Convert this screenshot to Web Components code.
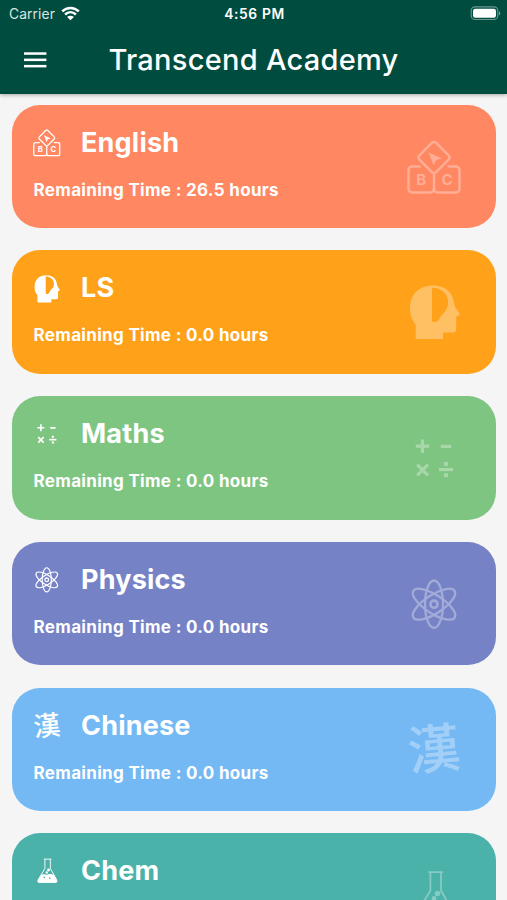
<!DOCTYPE html>
<html lang="en">
<head>
  <meta charset="utf-8">
  <title>Transcend Academy</title>
  <style>
    html{
      height: 100%;
      overflow: hidden;
    }

    body{
      margin: 0;
      height: 100%;
      overflow: hidden;
      background: #f5f5f5;
      font-family: Inter, "Liberation Sans", sans-serif;
      color: white;
    }
  </style>
</head>
<body>
  <ta-screen>
    <ta-status-bar slot="top" carrier="Carrier" time="4:56 PM"></ta-status-bar>
    <ta-app-bar slot="top">Transcend Academy</ta-app-bar>
    <ta-subject icon="blocks" hours="26.5" style="--card: #ff8762">English</ta-subject>
    <ta-subject icon="head" hours="0.0" style="--card: #ffa21a">LS</ta-subject>
    <ta-subject icon="maths" hours="0.0" style="--card: #7fc582">Maths</ta-subject>
    <ta-subject icon="atom" hours="0.0" style="--card: #7682c6">Physics</ta-subject>
    <ta-subject icon="han" hours="0.0" style="--card: #74b9f4">Chinese</ta-subject>
    <ta-subject icon="flask" hours="0.0" style="--card: #4bb2a9">Chem</ta-subject>
  </ta-screen>

  <script>
    // Every icon is drawn on a 54 x 54 grid
    const ICONS = {
      blocks: `
        <g fill="none" stroke="currentColor" stroke-width="2.5" stroke-linejoin="round" stroke-linecap="round">
          <path d="M12.5 26.6H5A3.5 3.5 0 0 0 1.5 30.1V49A3.5 3.5 0 0 0 5 52.5H23.5A3.5 3.5 0 0 0 27 49V34"/>
          <path d="M41.5 26.6H49A3.5 3.5 0 0 1 52.5 30.1V49A3.5 3.5 0 0 1 49 52.5H30.5A3.5 3.5 0 0 1 27 49"/>
          <rect x="15.2" y="5.7" width="23.6" height="23.6" rx="3" transform="rotate(45 27 17.5)"/>
        </g>
        <path fill="currentColor" d="M21.5 12.5 35 18.5 29.2 20 26.7 25.3Z"/>
        <text x="14.2" y="45.4">B</text>
        <text x="40" y="45.4">C</text>`,
      head: `
        <path fill="currentColor" fill-rule="evenodd" d="M8.7 54V39.5C5 35.5 3 29.5 3 23 3 9 12.5 .5 26 .5 37.5 .5 45.7 7 47 17.5L48 22 52.3 28.3C53 30 52 30.9 49.2 31.6V43.5C49.2 46 48.2 47.4 46 47.4H36V54ZM25 2.8V35.5C25 38 29.8 37.8 32 34.8 33.2 31.5 35 29.5 37.3 27.2 40.3 24 41.4 20.5 41 16 40.2 7.5 33.5 2.8 25 2.8Z"/>`,
      maths: `
        <g fill="none" stroke="currentColor" stroke-width="3.2">
          <path d="M8.8 15.2H22.2M15.5 8.5V21.9M33.8 15.4H44.2"/>
          <path d="M10.2 33.6 20.9 44.3M20.9 33.6 10.2 44.3"/>
          <path d="M32 38.6H46"/>
        </g>
        <rect fill="currentColor" x="37" y="31" width="4" height="4"/>
        <rect fill="currentColor" x="37" y="42.2" width="4" height="4"/>`,
      atom: `
        <g fill="none" stroke="currentColor" stroke-width="2.3">
          <ellipse cx="27" cy="27.2" rx="9" ry="23.7"/>
          <ellipse cx="27" cy="27.2" rx="9.2" ry="24.6" transform="rotate(57 27 27.2)"/>
          <ellipse cx="27" cy="27.2" rx="9.2" ry="24.6" transform="rotate(-57 27 27.2)"/>
          <circle cx="27" cy="27.2" r="3.6" stroke-width="2.6"/>
        </g>`,
      han: `
        <text class="han" x="27" y="46.5" transform="rotate(-5 27 27)">漢</text>`,
      flask: `
        <g fill="none" stroke="currentColor" stroke-width="1.8" stroke-linejoin="round">
          <path d="M21.2 4.2H36.2M23.4 4.2V22.5L10.5 44C8.5 48 9.5 50 12 50H44.5C47 50 48 48 46 44L34 22.5V4.2"/>
        </g>
        <path fill="currentColor" fill-rule="evenodd" d="M16.5 35C22 32.5 25 35.5 29 34.5 33.5 33 36 33.5 40.9 35L46.3 44.3C48 48 47 50 44.5 50H12C9.5 50 8.5 48 10.5 44ZM22 38.5A1.6 1.6 0 1 0 22 41.7 1.6 1.6 0 1 0 22 38.5ZM33 40A1.5 1.5 0 1 0 33 43 1.5 1.5 0 1 0 33 40Z"/>
        <circle cx="30.5" cy="25.5" r="2.8" fill="currentColor"/>
        <circle cx="27" cy="30.5" r="2.4" fill="currentColor"/>`
    }

    class Screen extends HTMLElement{
      constructor(){
        super()
        this.attachShadow({mode: 'open'})
      }

      connectedCallback(){
        this.shadowRoot.innerHTML = `
          <style>
            :host{
              display: flex;
              flex-direction: column;
              height: 100vh;
              overflow: hidden;
            }

            header{
              position: relative;
              flex: none;
              height: 94px;
              background: #004d40;
              box-shadow: 0 1px 4px rgba(0,0,0,0.32);
            }

            main{
              display: flex;
              flex-direction: column;
              gap: 22.1px;
              padding: 10.8px 11px 0 12px;
            }
          </style>
          <header><slot name="top"></slot></header>
          <main><slot></slot></main>
        `
      }
    }

    class StatusBar extends HTMLElement{
      constructor(){
        super()
        this.attachShadow({mode: 'open'})
      }

      connectedCallback(){
        this.shadowRoot.innerHTML = `
          <style>
            :host{
              display: grid;
              grid-template-columns: 1fr auto 1fr;
              align-items: center;
              height: 28px;
              padding: 0 6px 0 9px;
              font-size: 13.8px;
              line-height: 28px;
            }

            .left{
              display: flex;
              align-items: center;
              gap: 6px;
              color: #d9e5e2;
              letter-spacing: 0.1px;
            }

            .time{
              font-weight: 600;
              font-size: 13.8px;
              letter-spacing: 0.65px;
              padding-right: 1px;
            }

            .wifi{
              padding-bottom: 2px;
              color: white;
            }

            .battery{
              justify-self: end;
              padding-bottom: 1px;
            }

            svg{
              display: block;
            }
          </style>
          <div class="left">
            <span>${this.getAttribute('carrier')}</span>
            <svg class="wifi" width="19" height="15" viewBox="0 0 19 15">
              <g fill="none" stroke="currentColor" stroke-width="2.5">
                <path d="M1.2 5.4C6 .7 13 .7 17.8 5.4"/>
                <path d="M4.1 8.5C7.3 5.5 11.7 5.5 14.9 8.5"/>
              </g>
              <path fill="currentColor" d="M9.5 14.2 6.1 10.9C8 9.2 11 9.2 12.9 10.9Z"/>
            </svg>
          </div>
          <div class="time">${this.getAttribute('time')}</div>
          <svg class="battery" width="31" height="15" viewBox="0 0 31 15">
            <rect x="1.2" y=".9" width="26.6" height="12.6" rx="3.8" fill="none" stroke="#fff" stroke-opacity=".42" stroke-width="1.1"/>
            <rect x="3" y="2.7" width="23" height="9" rx="2.2" fill="#fff"/>
            <path d="M29 5.2C30.8 5.8 30.8 8.8 29 9.4Z" fill="#fff" fill-opacity=".45"/>
          </svg>
        `
      }
    }

    class AppBar extends HTMLElement{
      constructor(){
        super()
        this.attachShadow({mode: 'open'})
      }

      connectedCallback(){
        this.shadowRoot.innerHTML = `
          <style>
            :host{
              display: grid;
              grid-template-columns: 46px 1fr 46px;
              align-items: center;
              height: 64px;
              padding: 0 24px;
            }

            h1{
              margin: 0;
              font-size: 29px;
              font-weight: 500;
              line-height: 64px;
              letter-spacing: 0.27px;
              text-align: center;
              white-space: nowrap;
            }

            svg{
              display: block;
            }
          </style>
          <svg width="23" height="16" viewBox="0 0 23 16" fill="currentColor">
            <rect y=".3" width="22.4" height="2.5"/>
            <rect y="6.6" width="22.4" height="2.5"/>
            <rect y="12.9" width="22.4" height="2.5"/>
          </svg>
          <h1><slot></slot></h1>
        `
      }
    }

    class SubjectIcon extends HTMLElement{
      constructor(){
        super()
        this.attachShadow({mode: 'open'})
      }

      connectedCallback(){
        this.shadowRoot.innerHTML = `
          <style>
            :host{
              display: block;
              flex: none;
            }

            svg{
              display: block;
              width: 100%;
              height: 100%;
              overflow: visible;
            }

            text{
              fill: currentColor;
              font: 700 15px Inter, "Liberation Sans", sans-serif;
              text-anchor: middle;
            }

            .han{
              font: 500 53px "Noto Sans CJK TC", sans-serif;
            }
          </style>
          <svg viewBox="0 0 54 54">${ICONS[this.getAttribute('name')]}</svg>
        `
      }
    }

    class Subject extends HTMLElement{
      constructor(){
        super()
        this.attachShadow({mode: 'open'})
      }

      connectedCallback(){
        const icon = this.getAttribute('icon')
        this.shadowRoot.innerHTML = `
          <style>
            :host{
              display: flex;
              flex: none;
              align-items: center;
              justify-content: space-between;
              box-sizing: border-box;
              height: 123.6px;
              padding: 0 35px 0 21px;
              border-radius: 28px;
              background: var(--card);
            }

            .info{
              display: flex;
              flex-direction: column;
              gap: 17px;
              padding-bottom: 6.6px;
            }

            .title{
              display: flex;
              align-items: center;
              gap: 20.5px;
            }

            h2{
              margin: 0;
              font-size: 27px;
              font-weight: 700;
              line-height: 36px;
              letter-spacing: 0.2px;
            }

            p{
              margin: 0 0 0 0.6px;
              font-size: 17px;
              font-weight: 700;
              line-height: 24px;
              letter-spacing: 0.32px;
              font-feature-settings: "calt" 0;
              white-space: pre;
            }

            .small{
              width: 27.5px;
              height: 27.5px;
            }

            .large{
              width: 54px;
              height: 54px;
              opacity: 0.32;
            }
          </style>
          <div class="info">
            <div class="title">
              <ta-icon class="small" name="${icon}"></ta-icon>
              <h2><slot></slot></h2>
            </div>
            <p>Remaining Time : ${this.getAttribute('hours')} hours</p>
          </div>
          <ta-icon class="large" name="${icon}"></ta-icon>
        `
      }
    }

    customElements.define('ta-screen', Screen)
    customElements.define('ta-status-bar', StatusBar)
    customElements.define('ta-app-bar', AppBar)
    customElements.define('ta-icon', SubjectIcon)
    customElements.define('ta-subject', Subject)
  </script>
</body>
</html>
